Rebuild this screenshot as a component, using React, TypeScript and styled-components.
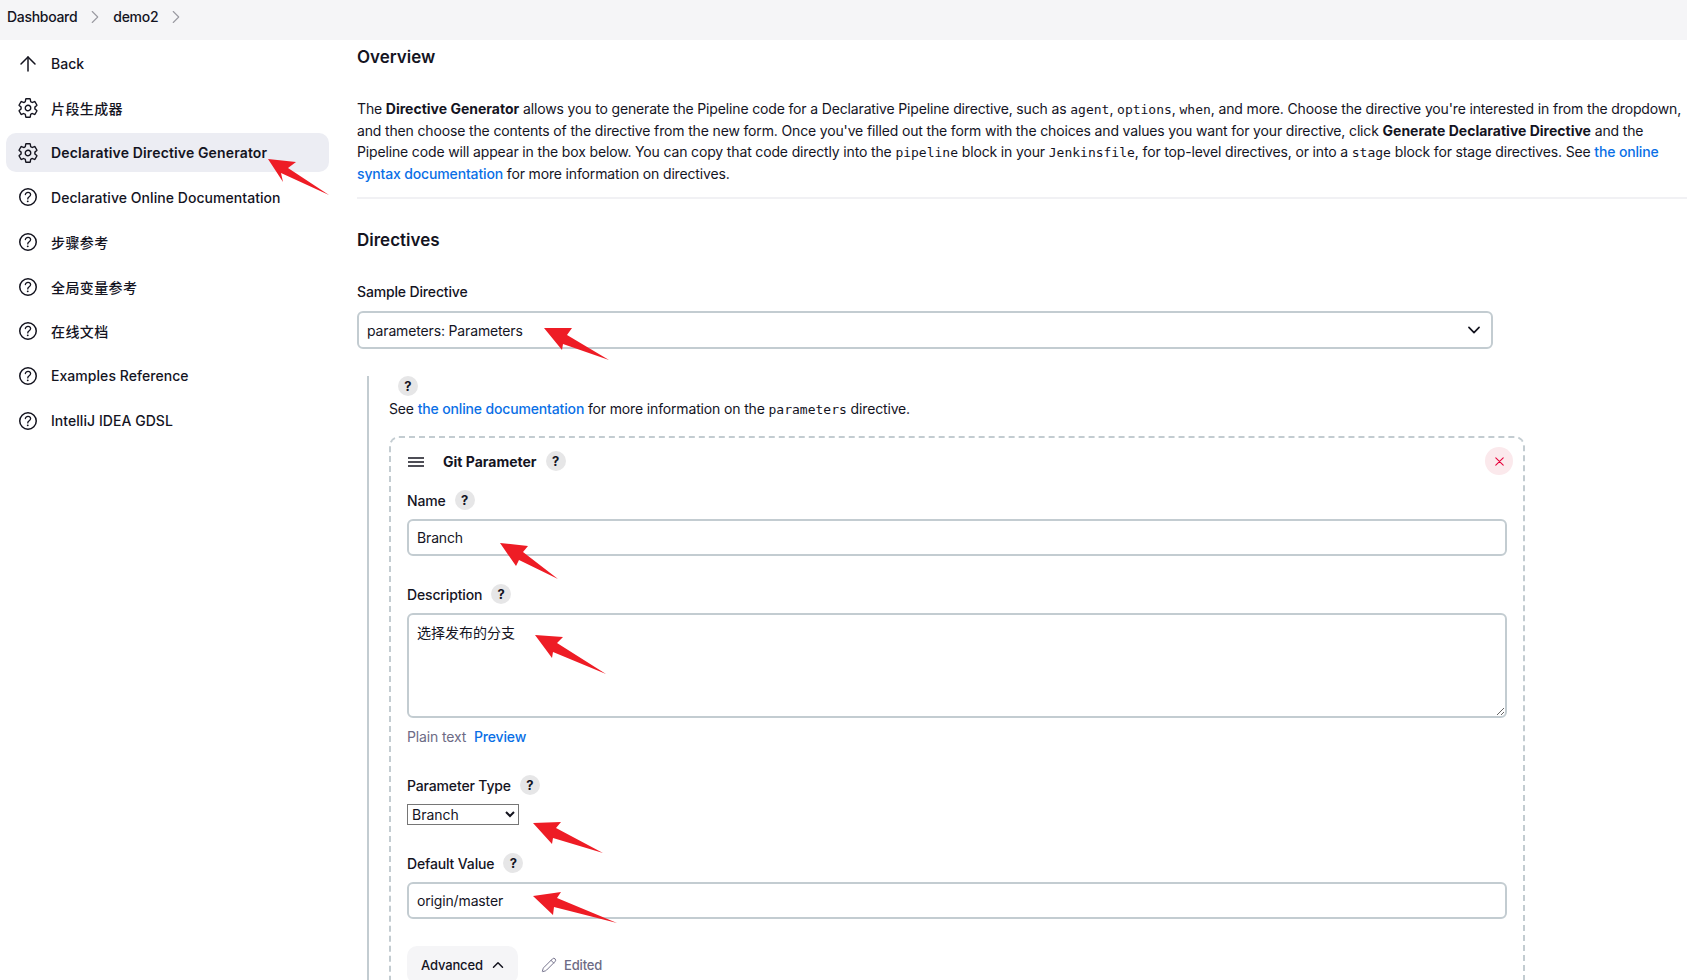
import styled, { createGlobalStyle } from "styled-components";
import { ArrowUp, ChevronRight, Pencil } from "lucide-react";
import {
  IoChevronDownOutline,
  IoChevronUpOutline,
  IoCloseOutline,
  IoHelpCircleOutline,
  IoSettingsOutline,
} from "react-icons/io5";

const sideItems = [
  { label: "Back", icon: "back" },
  { label: "片段生成器", icon: "gear", wide: true },
  { label: "Declarative Directive Generator", icon: "gear", active: true },
  { label: "Declarative Online Documentation", icon: "help" },
  { label: "步骤参考", icon: "help", wide: true },
  { label: "全局变量参考", icon: "help", wide: true },
  { label: "在线文档", icon: "help", wide: true },
  { label: "Examples Reference", icon: "help" },
  { label: "IntelliJ IDEA GDSL", icon: "help" },
];

// the red annotation arrows, drawn on top of the screenshot
const arrows = [
  "268,159 296,162 288,168 329,195 281,173 283,182",
  "544,328 572,328 567,335 609,360 563,344 562,350",
  "500,543 528,546 523,552 558,579 519,560 516,566",
  "535,635 563,637 557,643 606,674 553,652 552,658",
  "533,823 561,822 556,828 603,853 553,838 552,844",
  "533,896 561,892 557,898 617,923 554,907 553,915",
];

function SideIcon({ name }: { name: string }) {
  if (name === "back") return <ArrowUp size={24} strokeWidth={1.5} />;
  if (name === "gear") return <IoSettingsOutline size={22} />;
  return <IoHelpCircleOutline size={24} />;
}

function App() {
  return (
    <Page>
      <GlobalStyle />
      <Breadcrumbs>
        <Crumb>Dashboard</Crumb>
        <ChevronRight size={22} strokeWidth={1.2} />
        <Crumb>demo2</Crumb>
        <ChevronRight size={22} strokeWidth={1.2} />
      </Breadcrumbs>
      <Body>
        <Sidebar>
          {sideItems.map((item) => (
            <SideItem key={item.label} $active={item.active} $wide={item.wide}>
              <IconSlot>
                <SideIcon name={item.icon} />
              </IconSlot>
              {item.label}
            </SideItem>
          ))}
        </Sidebar>
        <Main>
          <Heading>Overview</Heading>
          <Intro>
            The <b>Directive Generator</b> allows you to generate the Pipeline code for a Declarative Pipeline directive, such as <code>agent</code>, <code>options</code>, <code>when</code>, and more. Choose the directive you're interested in from the dropdown, and then choose the contents of the directive from the new form. Once you've filled out the form with the choices and values you want for your directive, click <b>Generate Declarative Directive</b> and the Pipeline code will appear in the box below. You can copy that code directly into the <code>pipeline</code> block in your <code>Jenkinsfile</code>, for top-level directives, or into a <code>stage</code> block for stage directives. See <a href="#">the online syntax documentation</a> for more information on directives.
          </Intro>
          <Divider />
          <DirectivesHeading>Directives</DirectivesHeading>
          <SampleLabel>Sample Directive</SampleLabel>
          <SelectWrap>
            <BigSelect defaultValue="parameters">
              <option value="parameters">parameters: Parameters</option>
            </BigSelect>
            <SelectChevron>
              <IoChevronDownOutline size={18} />
            </SelectChevron>
          </SelectWrap>
          <Nested>
            <TopHelp>?</TopHelp>
            <SeeText>
              See <a href="#">the online documentation</a> for more information on the <code>parameters</code> directive.
            </SeeText>
            <RepeatBox>
              <BoxHeader>
                <Handle viewBox="0 0 16 10">
                  <path d="M0 1h16M0 5h16M0 9h16" stroke="#14141f" strokeWidth="1.3" />
                </Handle>
                <BoxTitle>Git Parameter</BoxTitle>
                <Help>?</Help>
                <DeleteButton>
                  <IoCloseOutline size={17} />
                </DeleteButton>
              </BoxHeader>
              <FieldLabel $first>
                Name <Help>?</Help>
              </FieldLabel>
              <TextInput defaultValue="Branch" readOnly />
              <FieldLabel>
                Description <Help>?</Help>
              </FieldLabel>
              <TextArea defaultValue="选择发布的分支" readOnly />
              <PreviewRow>
                Plain text <a href="#">Preview</a>
              </PreviewRow>
              <FieldLabel>
                Parameter Type <Help>?</Help>
              </FieldLabel>
              <TypeSelect defaultValue="Branch">
                <option>Branch</option>
              </TypeSelect>
              <FieldLabel>
                Default Value <Help>?</Help>
              </FieldLabel>
              <TextInput defaultValue="origin/master" readOnly />
              <AdvancedRow>
                <AdvancedButton>
                  Advanced
                  <IoChevronUpOutline size={16} />
                </AdvancedButton>
                <Edited>
                  <Pencil size={16} strokeWidth={1.4} />
                  Edited
                </Edited>
              </AdvancedRow>
            </RepeatBox>
          </Nested>
        </Main>
      </Body>
      <Overlay viewBox="0 0 1687 980">
        {arrows.map((points) => (
          <polygon key={points} points={points} fill="#ee1c25" />
        ))}
      </Overlay>
    </Page>
  );
}

export default App;

const fontStack = `Inter, "Noto Sans CJK SC", sans-serif`;

const GlobalStyle = createGlobalStyle`
  html, body {
    margin: 0;
    padding: 0;
    background: #fff;
  }
  body {
    font-family: ${fontStack};
    font-size: 14px;
    letter-spacing: -0.15px;
    color: #14141f;
  }
  * {
    box-sizing: border-box;
  }
  a {
    color: #0a6fe6;
    text-decoration: none;
    font-weight: 500;
  }
  b {
    letter-spacing: 0;
  }
  code {
    font-family: "DejaVu Sans Mono", monospace;
    font-size: 13px;
    line-height: 1;
    letter-spacing: 0;
  }
`;

const Page = styled.div`
  position: relative;
  width: 1687px;
  height: 980px;
  overflow: hidden;
`;

const Overlay = styled.svg`
  position: absolute;
  left: 0;
  top: 0;
  width: 1687px;
  height: 980px;
  pointer-events: none;
`;

const Breadcrumbs = styled.div`
  height: 40px;
  background: #f5f5f7;
  display: flex;
  align-items: flex-start;
  padding: 7px 0 0 7px;
  svg {
    color: #9a9aa2;
    margin: -1px 7px 0 7px;
    flex: none;
  }
`;

const Crumb = styled.span`
  font-weight: 500;
  line-height: 20px;
  letter-spacing: -0.3px;
`;

const Body = styled.div`
  display: flex;
  align-items: flex-start;
`;

const Sidebar = styled.nav`
  width: 323px;
  margin: 4px 28px 0 6px;
  flex: none;
  display: flex;
  flex-direction: column;
  gap: 5.65px;
`;

const SideItem = styled.div<{ $active?: boolean; $wide?: boolean }>`
  height: 39px;
  display: flex;
  align-items: center;
  gap: 13px;
  padding-left: 12px;
  border-radius: 10px;
  font-weight: ${(p) => (p.$active ? 600 : 500)};
  letter-spacing: ${(p) => (p.$wide ? "0.4px" : p.$active ? "0.14px" : "0.05px")};
  background: ${(p) => (p.$active ? "#ecedf3" : "transparent")};
`;

const IconSlot = styled.span`
  width: 20px;
  height: 24px;
  display: flex;
  align-items: center;
  justify-content: center;
  svg {
    flex: none;
  }
`;

const Main = styled.main`
  width: 1330px;
  flex: none;
  padding-top: 5px;
`;

const Heading = styled.h2`
  margin: 0;
  font-size: 17px;
  line-height: 24px;
  font-weight: 600;
  letter-spacing: 0;
`;

const DirectivesHeading = styled(Heading)`
  margin-top: 29px;
`;

const Intro = styled.p`
  margin: 29px 0 13px;
  line-height: 21.5px;
  b {
    font-weight: 700;
  }
`;

const Divider = styled.hr`
  margin: 0;
  border: none;
  height: 2px;
  background: #f1f1f4;
`;

const SampleLabel = styled.div`
  margin-top: 30px;
  font-weight: 500;
  line-height: 20px;
`;

const SelectWrap = styled.div`
  position: relative;
  width: 1136px;
  margin-top: 9px;
`;

const BigSelect = styled.select`
  display: block;
  width: 100%;
  height: 38px;
  appearance: none;
  background: #fff;
  border: 2px solid #c3ccd1;
  border-radius: 6px;
  padding: 0 8px;
  font: 400 14px ${fontStack};
  letter-spacing: -0.15px;
  color: #14141f;
`;

const SelectChevron = styled.span`
  position: absolute;
  right: 10px;
  top: 10px;
  display: flex;
`;

const Nested = styled.div`
  margin: 27px 0 0 10px;
  border-left: 2px solid #c3ccd1;
  padding-left: 20px;
`;

const Help = styled.span`
  width: 20px;
  height: 20px;
  flex: none;
  display: inline-flex;
  align-items: center;
  justify-content: center;
  border-radius: 50%;
  background: #e6e6e7;
  font-size: 13px;
  font-weight: 700;
  letter-spacing: 0;
  color: #14141f;
`;

const TopHelp = styled(Help)`
  display: flex;
  margin-left: 9px;
`;

const SeeText = styled.div`
  margin-top: 1.5px;
  line-height: 21px;
`;

const RepeatBox = styled.div`
  width: 1136px;
  margin-top: 17.5px;
  border: 2px dashed #c3ccd1;
  border-radius: 10px;
  padding: 9px 16px 60px;
`;

const BoxHeader = styled.div`
  height: 28px;
  display: flex;
  align-items: center;
`;

const Handle = styled.svg`
  width: 16px;
  height: 10px;
  margin: 1px 19px 0 1px;
  flex: none;
`;

const BoxTitle = styled.span`
  font-weight: 700;
  margin-right: 9px;
  letter-spacing: 0;
`;

const DeleteButton = styled.span`
  width: 28px;
  height: 28px;
  margin: 0 -6px 0 auto;
  display: flex;
  align-items: center;
  justify-content: center;
  border-radius: 50%;
  background: #fbe9ec;
  color: #e6003a;
`;

const FieldLabel = styled.div<{ $first?: boolean }>`
  display: flex;
  align-items: center;
  gap: 9px;
  height: 20px;
  margin: ${(p) => (p.$first ? "15px" : "28px")} 0 9px;
  font-weight: 500;
`;

const TextInput = styled.input`
  display: block;
  width: 100%;
  height: 37px;
  border: 2px solid #c3ccd1;
  border-radius: 6px;
  padding: 0 8px;
  outline: none;
  font: 400 14px ${fontStack};
  letter-spacing: -0.15px;
  color: #14141f;
`;

const TextArea = styled.textarea`
  display: block;
  width: 100%;
  height: 105px;
  border: 2px solid #c3ccd1;
  border-radius: 6px;
  padding: 7px 8px;
  outline: none;
  font: 400 14px/21px ${fontStack};
  color: #14141f;
`;

const PreviewRow = styled.div`
  margin-top: 9px;
  line-height: 20px;
  color: #6d6b85;
  a {
    margin-left: 4px;
  }
`;

const TypeSelect = styled.select`
  display: block;
  width: 112px;
  height: 21px;
  font: 400 14px ${fontStack};
  color: #14141f;
  background: #fff;
`;

const AdvancedRow = styled.div`
  margin-top: 27px;
  display: flex;
  align-items: center;
  gap: 23px;
`;

const AdvancedButton = styled.div`
  width: 111px;
  height: 38px;
  padding-left: 14px;
  display: flex;
  align-items: center;
  gap: 7px;
  border-radius: 10px;
  background: #f5f5f7;
  font-size: 13px;
  font-weight: 500;
`;

const Edited = styled.div`
  display: flex;
  align-items: center;
  gap: 7px;
  font-size: 13px;
  color: #6d6b85;
  font-weight: 500;
`;
